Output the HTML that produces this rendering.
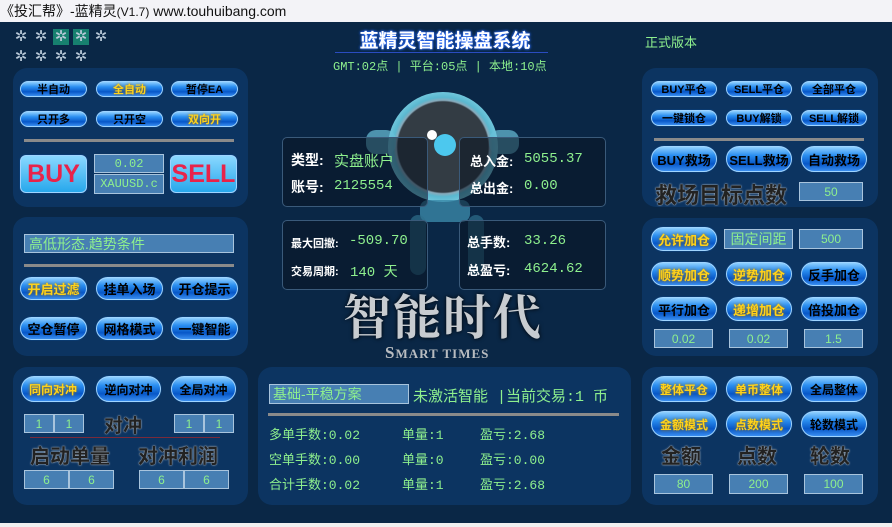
<!DOCTYPE html>
<html><head><meta charset="utf-8"><style>
*{margin:0;padding:0;box-sizing:border-box}
body{width:892px;height:527px;overflow:hidden;background:#0a2746;font-family:"Liberation Sans","Noto Sans CJK SC",sans-serif;position:relative}
.a{position:absolute}
.tb{left:0;top:0;width:892px;height:22px;background:#f3f3f7;color:#111;font-size:14px;line-height:22px;padding-left:0;white-space:nowrap}
.p{position:absolute;background:#0c3461;border-radius:14px}
.b{position:absolute;border-radius:10px;background:linear-gradient(#8fd0ff 0%,#2a8ef0 35%,#0757c8 70%,#3a8ef0 100%);border:1px solid #9fd4ff;box-shadow:0 0 0 1px #0a3a70;color:#000;font-weight:bold;text-align:center;font-size:11px;white-space:nowrap;display:flex;align-items:center;justify-content:center}
.y{color:#ffd21a;text-shadow:0 0 3px #a07000}
.big{font-size:14px;border-radius:13px}
.i{position:absolute;background:#477fb3;border:1px solid #a8c4dd;color:#8ef08e;font-size:12px;text-align:center;display:flex;align-items:center;justify-content:center;font-family:"Liberation Sans","Noto Sans CJK SC",sans-serif}
.hr{position:absolute;height:3px;background:#8a8a8a}
.g{color:#8ef08e}
.dk{position:absolute;color:#222;font-weight:bold;text-shadow:0 0 1px #ccc,0 0 2px #9ab;white-space:nowrap}
.sb{position:absolute;background:rgba(10,20,35,.55);border:1px solid #3a5a7a;border-radius:5px}
.lbl{position:absolute;color:#fff;font-weight:bold;font-size:14px;white-space:nowrap}
.v{position:absolute;color:#8ef08e;font-size:14px;font-family:"Liberation Mono",monospace;white-space:nowrap}
.gear{position:absolute;width:16px;height:16px;color:#b8c8d8;font-size:15px;line-height:16px;text-align:center}
.t{position:absolute;color:#8ef08e;font-size:13px;white-space:nowrap;font-family:"Liberation Mono","Noto Sans CJK SC",monospace}
</style></head><body>
<div class="a tb">《投汇帮》-蓝精灵<span style="font-size:12px">(V1.7)</span> www.touhuibang.com</div>
<div class="a" style="left:0;top:523px;width:892px;height:4px;background:#f0f0f0"></div>

<div class="gear" style="left:13px;top:29px">✲</div><div class="gear" style="left:33px;top:29px">✲</div>
<div class="gear" style="left:53px;top:29px;background:#17806f">✲</div><div class="gear" style="left:73px;top:29px;background:#17806f">✲</div>
<div class="gear" style="left:93px;top:29px">✲</div>
<div class="gear" style="left:13px;top:49px">✲</div><div class="gear" style="left:33px;top:49px">✲</div><div class="gear" style="left:53px;top:49px">✲</div><div class="gear" style="left:73px;top:49px">✲</div>

<div class="a" style="left:340px;top:26px;width:210px;text-align:center;color:#fff;font-weight:bold;font-size:19px;text-shadow:0 0 3px #2a6cff,0 0 2px #2a6cff">蓝精灵智能操盘系统</div>
<div class="a" style="left:335px;top:52px;width:213px;height:1px;background:#2a4cc0"></div>
<div class="t" style="left:333px;top:57px;font-size:12px">GMT:02点 | 平台:05点 | 本地:10点</div>
<div class="t" style="left:645px;top:32px;font-size:13px">正式版本</div>

<!-- robot -->
<div class="a" style="left:388px;top:92px;width:110px;height:110px;border-radius:50%;background:radial-gradient(circle,#333c44 0 58%,#8ab 60%,#5ab8d0 64%,#8fd8ea 80%,#4aa0b8 100%)"></div>
<div class="a" style="left:434px;top:134px;width:22px;height:22px;border-radius:50%;background:#4cc8ee"></div>
<div class="a" style="left:427px;top:130px;width:10px;height:10px;border-radius:50%;background:#fff"></div>
<div class="a" style="left:366px;top:130px;width:30px;height:24px;border-radius:10px;background:#6ac0d8;opacity:.7"></div>
<div class="a" style="left:489px;top:130px;width:30px;height:24px;border-radius:10px;background:#6ac0d8;opacity:.7"></div>
<div class="a" style="left:420px;top:200px;width:50px;height:22px;border-radius:8px;background:#3a88a8;opacity:.8"></div>
<div class="a" style="left:410px;top:215px;width:16px;height:60px;border-radius:8px;background:#2e6f8c;opacity:.7"></div>
<div class="a" style="left:468px;top:215px;width:16px;height:60px;border-radius:8px;background:#2e6f8c;opacity:.7"></div>

<div class="sb" style="left:282px;top:137px;width:146px;height:70px"></div>
<div class="sb" style="left:459px;top:137px;width:147px;height:70px"></div>
<div class="sb" style="left:282px;top:220px;width:146px;height:70px"></div>
<div class="sb" style="left:459px;top:220px;width:147px;height:70px"></div>
<div class="lbl" style="left:291px;top:150px">类型:</div><div class="v" style="left:334px;top:150px;font-size:15px">实盘账户</div>
<div class="lbl" style="left:291px;top:177px">账号:</div><div class="v" style="left:334px;top:178px">2125554</div>
<div class="lbl" style="left:470px;top:151px;font-size:13px">总入金:</div><div class="v" style="left:524px;top:151px">5055.37</div>
<div class="lbl" style="left:470px;top:178px;font-size:13px">总出金:</div><div class="v" style="left:524px;top:178px">0.00</div>
<div class="lbl" style="left:291px;top:235px;font-size:11px">最大回撤:</div><div class="v" style="left:349px;top:233px">-509.70</div>
<div class="lbl" style="left:291px;top:263px;font-size:11px">交易周期:</div><div class="v" style="left:350px;top:261px">140 天</div>
<div class="lbl" style="left:467px;top:232px;font-size:13px">总手数:</div><div class="v" style="left:524px;top:233px">33.26</div>
<div class="lbl" style="left:467px;top:260px;font-size:13px">总盈亏:</div><div class="v" style="left:524px;top:261px">4624.62</div>
<div class="a" style="left:343px;top:286px;font-family:'Noto Serif CJK SC',serif;font-size:48px;font-weight:bold;color:#c8ccd0;letter-spacing:2px;text-shadow:0 0 4px #000;line-height:56px">智能时代</div>
<div class="a" style="left:385px;top:343px;font-family:'Liberation Serif',serif;font-size:17px;font-weight:bold;color:#b8bcc0;letter-spacing:1px">S<span style="font-size:13px">MART TIMES</span></div>

<!-- left top panel -->
<div class="p" style="left:13px;top:68px;width:235px;height:139px"></div>
<div class="b" style="left:20px;top:81px;width:67px;height:16px">半自动</div>
<div class="b y" style="left:96px;top:81px;width:67px;height:16px">全自动</div>
<div class="b" style="left:171px;top:81px;width:67px;height:16px">暂停EA</div>
<div class="b" style="left:20px;top:111px;width:67px;height:16px">只开多</div>
<div class="b" style="left:96px;top:111px;width:67px;height:16px">只开空</div>
<div class="b y" style="left:171px;top:111px;width:67px;height:16px">双向开</div>
<div class="hr" style="left:24px;top:139px;width:210px"></div>
<div class="b" style="left:20px;top:155px;width:67px;height:38px;border-radius:6px;background:linear-gradient(#8ad8ff,#27a8ec);color:#e8234a;font-size:25px">BUY</div>
<div class="b" style="left:170px;top:155px;width:67px;height:38px;border-radius:6px;background:linear-gradient(#8ad8ff,#27a8ec);color:#e8234a;font-size:25px">SELL</div>
<div class="i" style="left:94px;top:154px;width:70px;height:19px;font-family:'Liberation Mono',monospace">0.02</div>
<div class="i" style="left:94px;top:174px;width:70px;height:20px;font-family:'Liberation Mono',monospace">XAUUSD.c</div>

<!-- left mid -->
<div class="p" style="left:13px;top:217px;width:235px;height:139px"></div>
<div class="i" style="left:24px;top:234px;width:210px;height:19px;justify-content:flex-start;padding-left:4px;font-size:14px">高低形态.趋势条件</div>
<div class="hr" style="left:24px;top:264px;width:210px"></div>
<div class="b big y" style="left:20px;top:277px;width:67px;height:23px;font-size:13px">开启过滤</div>
<div class="b big" style="left:96px;top:277px;width:67px;height:23px;font-size:13px">挂单入场</div>
<div class="b big" style="left:171px;top:277px;width:67px;height:23px;font-size:13px">开仓提示</div>
<div class="b big" style="left:20px;top:317px;width:67px;height:23px;font-size:13px">空仓暂停</div>
<div class="b big" style="left:96px;top:317px;width:67px;height:23px;font-size:13px">网格模式</div>
<div class="b big" style="left:171px;top:317px;width:67px;height:23px;font-size:13px">一键智能</div>

<!-- left bottom -->
<div class="p" style="left:13px;top:367px;width:235px;height:138px"></div>
<div class="b big y" style="left:21px;top:376px;width:64px;height:26px;font-size:12px">同向对冲</div>
<div class="b big" style="left:96px;top:376px;width:65px;height:26px;font-size:12px">逆向对冲</div>
<div class="b big" style="left:171px;top:376px;width:65px;height:26px;font-size:12px">全局对冲</div>
<div class="i" style="left:24px;top:414px;width:30px;height:19px">1</div><div class="i" style="left:54px;top:414px;width:30px;height:19px">1</div>
<div class="i" style="left:174px;top:414px;width:30px;height:19px">1</div><div class="i" style="left:204px;top:414px;width:30px;height:19px">1</div>
<div class="dk" style="left:104px;top:411px;font-size:19px">对冲</div>
<div class="a" style="left:30px;top:437px;width:190px;height:1px;background:#7a2a3a"></div>
<div class="dk" style="left:30px;top:440px;font-size:20px">启动单量</div>
<div class="dk" style="left:138px;top:440px;font-size:20px">对冲利润</div>
<div class="i" style="left:24px;top:470px;width:45px;height:19px">6</div><div class="i" style="left:69px;top:470px;width:45px;height:19px">6</div>
<div class="i" style="left:139px;top:470px;width:45px;height:19px">6</div><div class="i" style="left:184px;top:470px;width:45px;height:19px">6</div>

<!-- center bottom -->
<div class="p" style="left:258px;top:367px;width:373px;height:138px"></div>
<div class="i" style="left:269px;top:384px;width:140px;height:20px;justify-content:flex-start;padding-left:3px;font-size:14px">基础-平稳方案</div>
<div class="t" style="left:413px;top:385px;font-size:15px">未激活智能 |当前交易:1 币</div>
<div class="hr" style="left:268px;top:413px;width:351px"></div>
<div class="t" style="left:269px;top:424px">多单手数:0.02</div><div class="t" style="left:402px;top:424px">单量:1</div><div class="t" style="left:480px;top:424px">盈亏:2.68</div>
<div class="t" style="left:269px;top:449px">空单手数:0.00</div><div class="t" style="left:402px;top:449px">单量:0</div><div class="t" style="left:480px;top:449px">盈亏:0.00</div>
<div class="t" style="left:269px;top:474px">合计手数:0.02</div><div class="t" style="left:402px;top:474px">单量:1</div><div class="t" style="left:480px;top:474px">盈亏:2.68</div>

<!-- right top -->
<div class="p" style="left:642px;top:68px;width:236px;height:139px"></div>
<div class="b" style="left:651px;top:81px;width:66px;height:16px">BUY平仓</div>
<div class="b" style="left:726px;top:81px;width:66px;height:16px">SELL平仓</div>
<div class="b" style="left:801px;top:81px;width:66px;height:16px">全部平仓</div>
<div class="b" style="left:651px;top:110px;width:66px;height:16px">一键锁仓</div>
<div class="b" style="left:726px;top:110px;width:66px;height:16px">BUY解锁</div>
<div class="b" style="left:801px;top:110px;width:66px;height:16px">SELL解锁</div>
<div class="hr" style="left:654px;top:138px;width:210px"></div>
<div class="b big" style="left:651px;top:146px;width:66px;height:26px;font-size:13px">BUY救场</div>
<div class="b big" style="left:726px;top:146px;width:66px;height:26px;font-size:13px">SELL救场</div>
<div class="b big" style="left:801px;top:146px;width:66px;height:26px;font-size:13px">自动救场</div>
<div class="dk" style="left:655px;top:178px;font-size:22px">救场目标点数</div>
<div class="i" style="left:799px;top:182px;width:64px;height:19px">50</div>

<!-- right mid -->
<div class="p" style="left:642px;top:218px;width:236px;height:138px"></div>
<div class="b big y" style="left:651px;top:227px;width:66px;height:24px;font-size:13px">允许加仓</div>
<div class="i" style="left:724px;top:229px;width:69px;height:20px;font-size:14px">固定间距</div>
<div class="i" style="left:799px;top:229px;width:64px;height:20px">500</div>
<div class="b big y" style="left:651px;top:262px;width:66px;height:24px;font-size:13px">顺势加仓</div>
<div class="b big y" style="left:726px;top:262px;width:66px;height:24px;font-size:13px">逆势加仓</div>
<div class="b big" style="left:801px;top:262px;width:66px;height:24px;font-size:13px">反手加仓</div>
<div class="b big" style="left:651px;top:297px;width:66px;height:24px;font-size:13px">平行加仓</div>
<div class="b big y" style="left:726px;top:297px;width:66px;height:24px;font-size:13px">递增加仓</div>
<div class="b big" style="left:801px;top:297px;width:66px;height:24px;font-size:13px">倍投加仓</div>
<div class="i" style="left:654px;top:329px;width:59px;height:19px">0.02</div>
<div class="i" style="left:729px;top:329px;width:59px;height:19px">0.02</div>
<div class="i" style="left:804px;top:329px;width:59px;height:19px">1.5</div>

<!-- right bottom -->
<div class="p" style="left:642px;top:367px;width:236px;height:138px"></div>
<div class="b big y" style="left:651px;top:376px;width:66px;height:26px;font-size:12px">整体平仓</div>
<div class="b big y" style="left:726px;top:376px;width:66px;height:26px;font-size:12px">单币整体</div>
<div class="b big" style="left:801px;top:376px;width:66px;height:26px;font-size:12px">全局整体</div>
<div class="b big y" style="left:651px;top:411px;width:66px;height:26px;font-size:12px">金额模式</div>
<div class="b big y" style="left:726px;top:411px;width:66px;height:26px;font-size:12px">点数模式</div>
<div class="b big" style="left:801px;top:411px;width:66px;height:26px;font-size:12px">轮数模式</div>
<div class="dk" style="left:661px;top:440px;font-size:20px">金额</div>
<div class="dk" style="left:737px;top:440px;font-size:20px">点数</div>
<div class="dk" style="left:810px;top:440px;font-size:20px">轮数</div>
<div class="i" style="left:654px;top:474px;width:59px;height:20px">80</div>
<div class="i" style="left:729px;top:474px;width:59px;height:20px">200</div>
<div class="i" style="left:804px;top:474px;width:59px;height:20px">100</div>
</body></html>
